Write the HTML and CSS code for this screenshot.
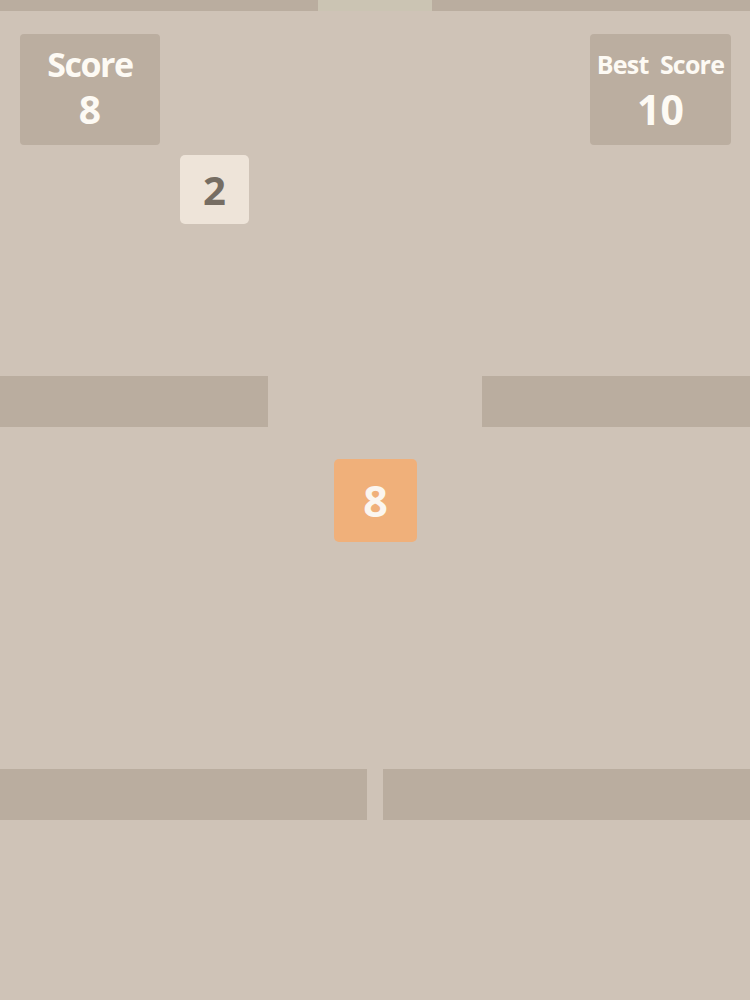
FILE: index.html
```html
<!DOCTYPE html>
<html lang="en">
<head>
  <meta charset="UTF-8" />
  <meta name="viewport" content="width=device-width, initial-scale=1.0"/>
  <title>Flappy 2048</title>
  <link rel="stylesheet" href="styles.css">
</head>
<body>

  <div class="stage">
    <!-- pipes: each row is a wall with a gap to fly through -->
    <div class="pipe" style="left:0;top:0;width:318px;height:11px"></div>
    <div class="gap-glow" style="left:318px;top:0;width:114px;height:11px"></div>
    <div class="pipe" style="left:432px;top:0;width:318px;height:11px"></div>

    <div class="pipe" style="left:0;top:376px;width:268px"></div>
    <div class="pipe" style="left:482px;top:376px;width:268px"></div>

    <div class="pipe" style="left:0;top:769px;width:367px"></div>
    <div class="pipe" style="left:383px;top:769px;width:367px"></div>

    <div class="hud">
      <div class="score-box">
        <div class="label">Score</div>
        <div class="value">8</div>
      </div>
      <div class="score-box best">
        <div class="label">Best&nbsp;&nbsp;Score</div>
        <div class="value">10</div>
      </div>
    </div>

    <div class="tile tile-2" style="left:180px;top:155px">2</div>
    <div class="tile tile-8" style="left:334px;top:459px">8</div>
  </div>

</body>
</html>
```

FILE: styles.css
```css
body {
  margin: 0;
  background: #cfc3b7;
  font-family: "Open Sans", Arial, sans-serif;
}
.stage {
  position: relative;
  width: 750px;
  height: 1000px;
  overflow: hidden;
  background: #cfc3b7;
}
.pipe {
  position: absolute;
  height: 51px;
  background: #baad9f;
}
.gap-glow {
  position: absolute;
  background: #cbc4b3;
}
.hud {
  position: relative;
  display: flex;
  justify-content: space-between;
  padding: 34px 19px 0 20px;
}
.score-box {
  width: 140px;
  height: 111px;
  background: #bbaea0;
  border-radius: 4px;
  color: #fdfaf4;
  font-weight: 700;
  text-align: center;
  box-sizing: border-box;
  padding-top: 8px;
}
.score-box .label {
  font-size: 34px;
  line-height: 44px;
  letter-spacing: -1.5px;
}
.score-box .value {
  font-size: 39px;
  line-height: 46px;
}
.score-box.best {
  width: 141px;
  padding-top: 10px;
}
.score-box.best .label {
  font-size: 25px;
  line-height: 40px;
  letter-spacing: -0.8px;
}
.score-box.best .value {
  font-size: 41px;
  line-height: 50px;
}
.tile {
  position: absolute;
  display: flex;
  align-items: center;
  justify-content: center;
  border-radius: 5px;
  font-weight: 700;
}
.tile-2 {
  width: 69px;
  height: 69px;
  background: #eee4d9;
  color: #766d63;
  font-size: 40px;
}
.tile-8 {
  width: 83px;
  height: 83px;
  background: #f0b07a;
  color: #fbf6f0;
  font-size: 43px;
}
```
